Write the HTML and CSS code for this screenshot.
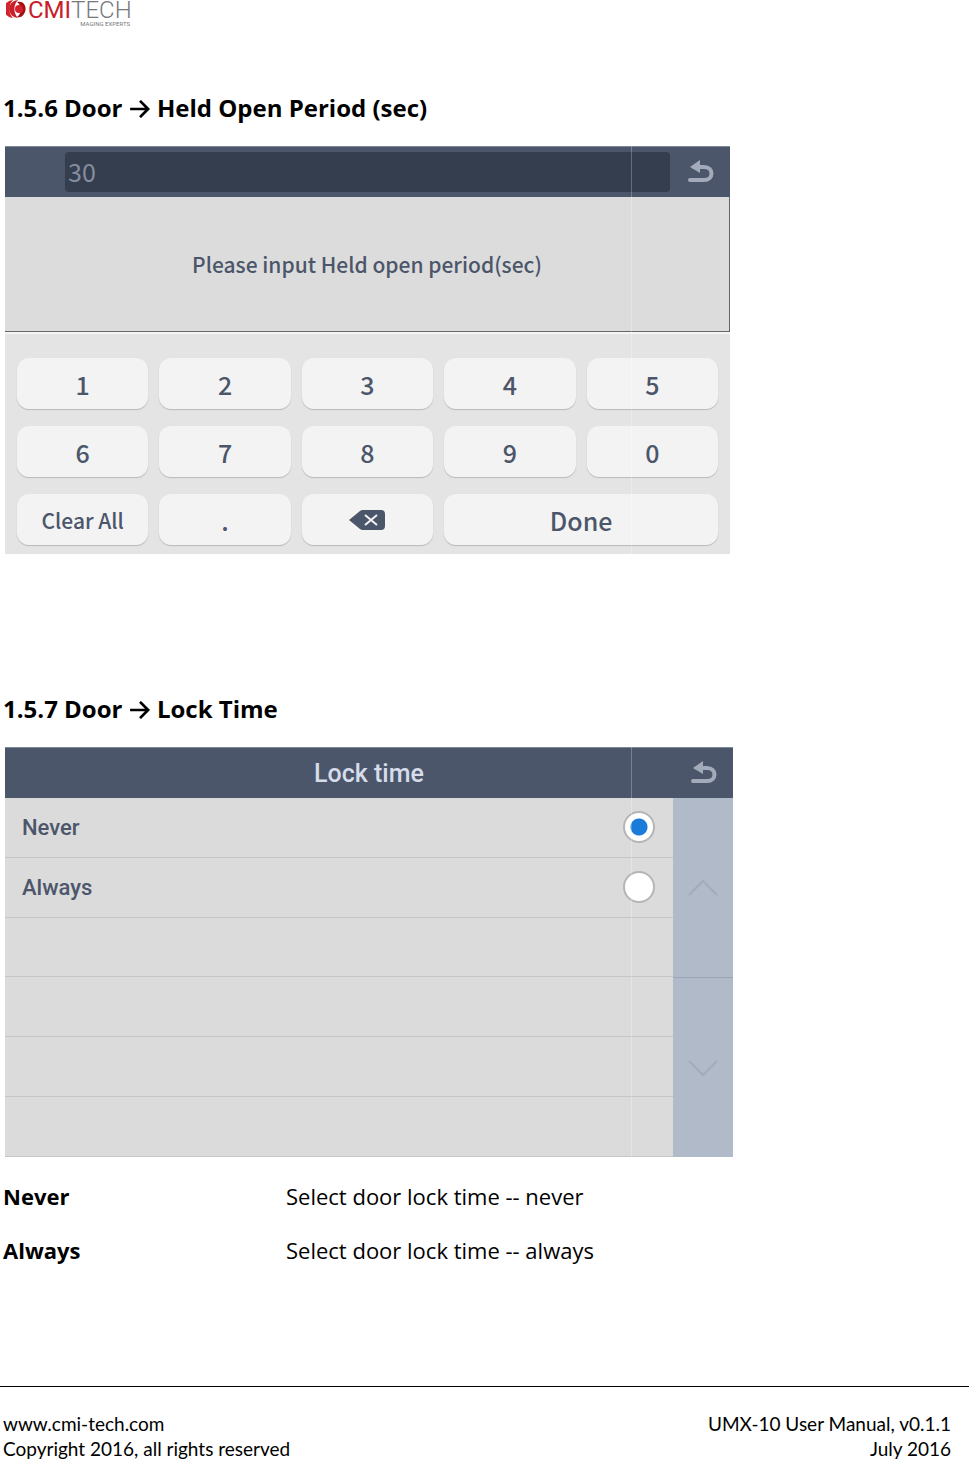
FILE: index.html
```
<!DOCTYPE html>
<html lang="en">
<head>
    <meta charset="UTF-8">
    <meta name="viewport" content="width=device-width, initial-scale=1.0">
    <title>UMX-10 User Manual</title>
    <link rel="stylesheet" href="styles.css">
</head>
<body>

<header class="page-header">
    <svg class="logo-mark" viewBox="0 0 20 20" aria-hidden="true">
        <path d="M7 0A9 9 0 0 0 7 18A13 13 0 0 1 7 0Z" fill="#d3222b"/>
        <path d="M12 0A9 9 0 0 0 12 18A13 13 0 0 1 12 0Z" fill="#c8202a"/>
        <path d="M11 2C18 0 21 7 19 12C17 17 13 18 11 17C16 14 16 5 11 2Z" fill="#a50f18"/>
        <circle cx="13" cy="9" r="4" fill="#d3222b"/>
    </svg>
    <div class="logo-text">
        <div class="logo-name"><span class="logo-red">CMI</span>TECH</div>
        <div class="logo-tag">MAGING EXPERTS</div>
    </div>
</header>

<main>
    <section class="topic">
        <h2>1.5.6 Door
            <svg class="arrow" viewBox="0 0 22 20" role="img" aria-label="to"><path d="M0 10H19M11 1L20 10L11 19"/></svg>
            Held Open Period (sec)</h2>

        <div class="screen">
            <div class="bar">
                <input type="text" class="value-input" value="30" aria-label="Held open period">
                <button class="back" aria-label="Back">
                    <svg viewBox="0 0 28 24"><path class="hook" d="M8 7H18C28 7 28 20 18 20H4"/><path class="head" d="M4 7L14 0V13Z"/></svg>
                </button>
            </div>
            <p class="message">Please input Held open period(sec)</p>
            <div class="keypad">
                <button>1</button>
                <button>2</button>
                <button>3</button>
                <button>4</button>
                <button>5</button>
                <button>6</button>
                <button>7</button>
                <button>8</button>
                <button>9</button>
                <button>0</button>
                <button class="clear">Clear All</button>
                <button>.</button>
                <button aria-label="Delete">
                    <svg class="delete-icon" viewBox="0 0 38 20">
                        <path d="M1 10L12 1Q13 0 15 0H33Q37 0 37 4V16Q37 20 33 20H15Q13 20 12 19Z" fill="#4c566a"/>
                        <path d="M17 5L29 15M29 5L17 15" stroke="#f3f3f3" stroke-width="2"/>
                    </svg>
                </button>
                <button class="done">Done</button>
            </div>
        </div>
    </section>

    <section class="topic">
        <h2>1.5.7 Door
            <svg class="arrow" viewBox="0 0 22 20" role="img" aria-label="to"><path d="M0 10H19M11 1L20 10L11 19"/></svg>
            Lock Time</h2>

        <div class="screen screen-list">
            <div class="bar">
                <h3>Lock time</h3>
                <button class="back" aria-label="Back">
                    <svg viewBox="0 0 28 24"><path class="hook" d="M8 7H18C28 7 28 20 18 20H4"/><path class="head" d="M4 7L14 0V13Z"/></svg>
                </button>
            </div>
            <div class="list-body">
                <div class="options">
                    <label class="option">Never <input type="radio" name="lock" checked></label>
                    <label class="option">Always <input type="radio" name="lock"></label>
                    <div class="option"></div>
                    <div class="option"></div>
                    <div class="option"></div>
                    <div class="option"></div>
                </div>
                <div class="scroller">
                    <button aria-label="Scroll up"><svg viewBox="0 0 30 16"><path d="M1 15L15 1L29 15"/></svg></button>
                    <button aria-label="Scroll down"><svg viewBox="0 0 30 16"><path d="M1 1L15 15L29 1"/></svg></button>
                </div>
            </div>
        </div>

        <dl class="terms">
            <dt>Never</dt>
            <dd>Select door lock time -- never</dd>
            <dt>Always</dt>
            <dd>Select door lock time -- always</dd>
        </dl>
    </section>
</main>

<footer class="page-footer">
    <div class="footer-col">
        <a href="http://www.cmi-tech.com">www.cmi-tech.com</a>
        <span>Copyright 2016, all rights reserved</span>
    </div>
    <div class="footer-col footer-right">
        <span>UMX-10 User Manual, v0.1.1</span>
        <span>July 2016</span>
    </div>
</footer>

</body>
</html>
```
FILE: styles.css
```
* {
    box-sizing: border-box;
}

body {
    margin: 0;
    background: #fff;
    color: #000;
    font-family: "Open Sans", "Noto Sans", sans-serif;
}

button {
    border: 0;
    padding: 0;
    font: inherit;
    color: inherit;
    cursor: pointer;
}

/* Logo */
.page-header {
    display: flex;
    align-items: flex-start;
    gap: 2px;
    height: 92px;
    padding-left: 6px;
}

.logo-mark {
    width: 20px;
    height: 20px;
}

.logo-text {
    width: 102px;
    color: #77787b;
    font-family: Roboto, sans-serif;
}

.logo-name {
    font-size: 24px;
    font-weight: 300;
    line-height: 20px;
}

.logo-red {
    color: #c8202a;
    font-weight: 400;
}

.logo-tag {
    font-size: 6px;
    line-height: 8px;
    text-align: right;
}

/* Topics */
.topic + .topic {
    margin-top: 139px;
}

h2 {
    margin: 0 0 22px 3px;
    font-size: 24px;
    font-weight: 700;
    line-height: 32px;
}

.arrow {
    width: 22px;
    height: 18px;
    vertical-align: -1px;
    fill: none;
    stroke: #000;
    stroke-width: 3;
}

/* Device screens */
.screen {
    position: relative;
    max-width: 725px;
    margin-left: 5px;
    background: #e4e4e4;
    color: #4c566a;
    font-family: "Noto Sans CJK SC", sans-serif;
    font-weight: 500;
}

.screen-list {
    max-width: 728px;
    font-family: Roboto, sans-serif;
}

/* thin seam running down the screen */
.screen::after {
    content: "";
    position: absolute;
    top: 0;
    bottom: 0;
    left: 626px;
    width: 1px;
    background: rgba(255, 255, 255, 0.25);
    pointer-events: none;
}

.bar {
    display: flex;
    align-items: center;
    height: 51px;
    padding-left: 60px;
    background: #4c566a;
    border-top: 1px solid #7d8899;
}

.value-input {
    flex: 1;
    min-width: 0;
    height: 40px;
    padding: 0 3px 2px;
    border: 0;
    border-radius: 4px;
    background: #353e4f;
    color: #848d9e;
    font-family: "Noto Sans CJK SC", sans-serif;
    font-size: 25px;
}

.bar h3 {
    flex: 1;
    margin: 0;
    color: #d5dcea;
    font-size: 25px;
    font-weight: 500;
    text-align: center;
}

.back {
    width: 60px;
    height: 50px;
    background: none;
}

.back svg {
    display: block;
    width: 28px;
    height: 24px;
    margin: 0 auto;
}

.back .hook {
    fill: none;
    stroke: #a3abba;
    stroke-width: 4;
    stroke-linecap: round;
}

.back .head {
    fill: #a3abba;
}

.message {
    display: flex;
    align-items: center;
    justify-content: center;
    height: 135px;
    margin: 0;
    background: #dcdcdc;
    border: solid #666;
    border-width: 0 1px 1px 0;
    font-size: 21px;
}

.keypad {
    display: grid;
    grid-template-columns: repeat(5, 1fr);
    grid-auto-rows: 51px;
    gap: 17px 11px;
    padding: 24px 12px 9px;
    border-top: 2px solid #f5f5f5;
}

.keypad button {
    border-radius: 12px;
    background: #f3f3f3;
    box-shadow: 0 1px 1px #b8b8b8;
    font-size: 25px;
    line-height: 48px;
}

.keypad .clear {
    font-size: 21px;
}

.keypad .done {
    grid-column: span 2;
}

.delete-icon {
    display: block;
    width: 38px;
    height: 20px;
    margin: 0 auto;
}

/* Option list */
.list-body {
    display: flex;
}

.options {
    display: grid;
    grid-template-rows: repeat(6, 1fr);
    flex: 1;
    min-height: 359px;
}

.option {
    display: flex;
    align-items: center;
    justify-content: space-between;
    padding: 0 18px 0 17px;
    background: #dbdbdb;
    border-bottom: 1px solid #c6c6c6;
    font-size: 22px;
}

.option input {
    appearance: none;
    width: 32px;
    height: 32px;
    margin: 0;
    border: 2px solid #b5b5b5;
    border-radius: 50%;
    background: #fff;
}

.option input:checked {
    background: radial-gradient(circle, #1b7bd8 8px, #fff 9px);
}

.scroller {
    display: flex;
    flex-direction: column;
    width: 60px;
}

.scroller button {
    flex: 1;
    background: #b0bac8;
}

.scroller button + button {
    border-top: 1px solid #9ba7b8;
}

.scroller svg {
    display: block;
    width: 30px;
    height: 16px;
    margin: 0 auto;
    fill: none;
    stroke: #a0acbc;
    stroke-width: 2;
}

/* Term list */
.terms {
    display: grid;
    grid-template-columns: 283px 1fr;
    row-gap: 22px;
    margin: 23px 0 0 3px;
    font-size: 22px;
    line-height: 32px;
}

.terms dt {
    font-weight: 700;
}

.terms dd {
    margin: 0;
}

/* Footer */
.page-footer {
    display: flex;
    justify-content: space-between;
    margin-top: 120px;
    padding: 26px 18px 0 3px;
    border-top: 1px solid #000;
    font-family: Lato, sans-serif;
    font-size: 19px;
    line-height: 21px;
}

.footer-col {
    display: flex;
    flex-direction: column;
    gap: 4px;
}

.footer-right {
    text-align: right;
}

.page-footer a {
    color: inherit;
    text-decoration: none;
}
```
